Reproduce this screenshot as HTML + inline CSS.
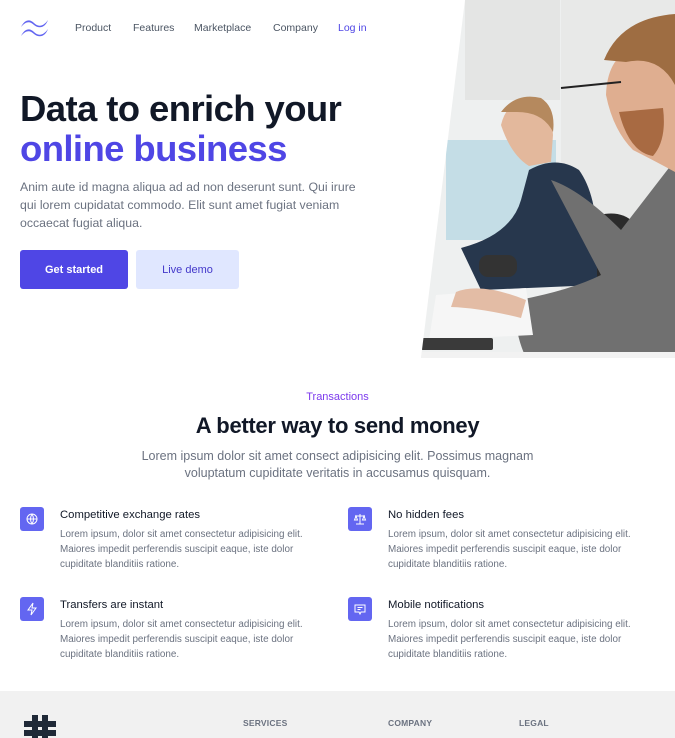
<!DOCTYPE html>
<html><head><meta charset="utf-8"><style>
*{margin:0;padding:0;box-sizing:border-box}
body{width:675px;height:738px;overflow:hidden;background:#fff;font-family:"Liberation Sans",sans-serif;position:relative}
.a{position:absolute;white-space:nowrap}
.nav{font-size:10.5px;color:#4b5563;top:22px}
h1{position:absolute;left:20px;top:89px;font-size:36.5px;line-height:40px;letter-spacing:-0.6px;color:#111827;font-weight:bold}
h1 span{color:#4f46e5}
.p{font-size:12.3px;color:#6b7280;line-height:18px}
.btn{position:absolute;top:250px;height:39px;border-radius:3px;font-size:11px;display:flex;align-items:center;justify-content:center}
.ic{position:absolute;width:24px;height:24px;border-radius:3px;background:#6366f1}
.ic svg{position:absolute;left:5px;top:5px}
.ft{font-size:11.3px;color:#111827}
.fb{font-size:9.9px;color:#6b7280;line-height:15px}
.fh{font-size:8.5px;color:#6b7280;top:718px;font-weight:bold;letter-spacing:0.2px}
</style></head><body>
<svg class="a" style="left:20px;top:19px" width="29" height="18" viewBox="0 0 29 18"><path d="M1 8 C5 0,10 0,14 4 C18 8,23 8,28 1 C25 9,19 10,14 6 C10 2,6 2,1 8Z M1 17 C5 9,10 9,14 13 C18 17,23 17,28 10 C25 18,19 19,14 15 C10 11,6 11,1 17Z" fill="#6366f1"/></svg>
<div class="a nav" style="left:75px">Product</div>
<div class="a nav" style="left:133px">Features</div>
<div class="a nav" style="left:194px">Marketplace</div>
<div class="a nav" style="left:273px">Company</div>
<div class="a nav" style="left:338px;color:#4f46e5">Log in</div>
<h1>Data to enrich your<br><span>online business</span></h1>
<div class="a p" style="left:20px;top:178px">Anim aute id magna aliqua ad ad non deserunt sunt. Qui irure<br>qui lorem cupidatat commodo. Elit sunt amet fugiat veniam<br>occaecat fugiat aliqua.</div>
<div class="btn" style="left:20px;width:108px;background:#4f46e5;color:#fff;font-weight:bold">Get started</div>
<div class="btn" style="left:136px;width:103px;background:#e0e7ff;color:#4338ca">Live demo</div>
<svg class="a" style="left:421px;top:0" width="254" height="358" viewBox="0 0 254 358">
<defs><clipPath id="c"><polygon points="44,0 254,0 254,358 0,358"/></clipPath></defs>
<g clip-path="url(#c)">
<rect width="254" height="358" fill="#eef0f0"/>
<rect x="44" y="0" width="95" height="100" fill="#e4e5e4"/>
<rect x="25" y="140" width="110" height="100" fill="#c4dde6"/>
<rect x="140" y="0" width="114" height="358" fill="#e8e9e8"/>
<path d="M178 215 Q200 210 212 222 L205 280 L175 285 Z" fill="#2b2b2b"/>
<path d="M40 248 Q90 235 100 200 L108 170 Q135 155 158 170 Q176 195 176 245 L176 285 L60 290 Z" fill="#27374d"/>
<path d="M80 125 Q86 100 108 100 Q130 104 132 135 L130 162 L108 166 Q90 155 80 125Z" fill="#e3b89c"/>
<path d="M80 112 Q95 92 120 98 Q135 108 132 132 Q122 112 96 112Z" fill="#b5895e"/>
<path d="M130 180 Q160 190 200 230 L254 160 L254 358 L105 358 Q90 325 98 300 Q150 290 180 275 Z" fill="#707070"/>
<path d="M185 95 Q186 60 210 48 L254 42 L254 172 Q232 160 212 150 Q192 130 185 95Z" fill="#dfae90"/>
<path d="M183 60 Q200 18 254 14 L254 85 Q238 55 205 62 Z" fill="#9e6d42"/>
<path d="M198 112 Q208 152 232 156 Q246 140 242 108 Z" fill="#a86a42"/>
<path d="M140 88 L200 82" stroke="#222" stroke-width="2" fill="none"/>
<path d="M15 295 L105 288 L112 335 L8 340Z" fill="#f6f6f6"/>
<path d="M35 292 Q60 282 105 300 L100 318 Q60 308 30 307Z" fill="#e3bca5"/>
<rect x="58" y="255" width="38" height="22" rx="9" fill="#333"/>
<rect x="0" y="338" width="72" height="12" rx="2" fill="#3a3a3a"/>
<rect x="0" y="352" width="254" height="6" fill="#f2f2f2"/>
</g></svg>
<div class="a" style="left:0;width:675px;text-align:center;top:391px;font-size:11px;color:#7c3aed">Transactions</div>
<div class="a" style="left:0;width:675px;text-align:center;top:413px;font-size:22px;font-weight:bold;color:#111827;letter-spacing:-0.3px">A better way to send money</div>
<div class="a p" style="left:0;width:675px;text-align:center;top:448px;white-space:normal;font-size:12.5px;line-height:17px">Lorem ipsum dolor sit amet consect adipisicing elit. Possimus magnam<br>voluptatum cupiditate veritatis in accusamus quisquam.</div>

<div class="ic" style="left:20px;top:507px"><svg width="14" height="14" viewBox="0 0 14 14" fill="none" stroke="#fff" stroke-width="1"><circle cx="7" cy="7" r="5"/><path d="M2 7h10M7 2q-3 5 0 10M7 2q3 5 0 10"/></svg></div>
<div class="a ft" style="left:60px;top:509px">Competitive exchange rates</div>
<div class="a fb" style="left:60px;top:527px">Lorem ipsum, dolor sit amet consectetur adipisicing elit.<br>Maiores impedit perferendis suscipit eaque, iste dolor<br>cupiditate blanditiis ratione.</div>
<div class="ic" style="left:348px;top:507px"><svg width="14" height="14" viewBox="0 0 14 14" fill="none" stroke="#fff" stroke-width="1"><path d="M7 2v10M3 12h8M2 4h10M3 4l-1.5 4h3zM11 4l-1.5 4h3z"/></svg></div>
<div class="a ft" style="left:388px;top:509px">No hidden fees</div>
<div class="a fb" style="left:388px;top:527px">Lorem ipsum, dolor sit amet consectetur adipisicing elit.<br>Maiores impedit perferendis suscipit eaque, iste dolor<br>cupiditate blanditiis ratione.</div>
<div class="ic" style="left:20px;top:597px"><svg width="14" height="14" viewBox="0 0 14 14" fill="none" stroke="#fff" stroke-width="1"><path d="M8 1L3 8h4l-1 5 5-7H7z"/></svg></div>
<div class="a ft" style="left:60px;top:599px">Transfers are instant</div>
<div class="a fb" style="left:60px;top:617px">Lorem ipsum, dolor sit amet consectetur adipisicing elit.<br>Maiores impedit perferendis suscipit eaque, iste dolor<br>cupiditate blanditiis ratione.</div>
<div class="ic" style="left:348px;top:597px"><svg width="14" height="14" viewBox="0 0 14 14" fill="none" stroke="#fff" stroke-width="1"><path d="M2 3h10v7H8l-1 2-1-2H2z M4.5 5.5h5M4.5 7.5h3"/></svg></div>
<div class="a ft" style="left:388px;top:599px">Mobile notifications</div>
<div class="a fb" style="left:388px;top:617px">Lorem ipsum, dolor sit amet consectetur adipisicing elit.<br>Maiores impedit perferendis suscipit eaque, iste dolor<br>cupiditate blanditiis ratione.</div>

<div class="a" style="left:0;top:691px;width:675px;height:47px;background:#f1f1f1"></div>
<svg class="a" style="left:23px;top:714px" width="36" height="24" viewBox="0 0 36 24"><g stroke="#1f2937" stroke-width="6" stroke-linecap="square"><path d="M12 4v18M22 4v18M4 10h26M4 19h26"/></g></svg>
<div class="a fh" style="left:243px">SERVICES</div>
<div class="a fh" style="left:388px">COMPANY</div>
<div class="a fh" style="left:519px">LEGAL</div>
</body></html>
